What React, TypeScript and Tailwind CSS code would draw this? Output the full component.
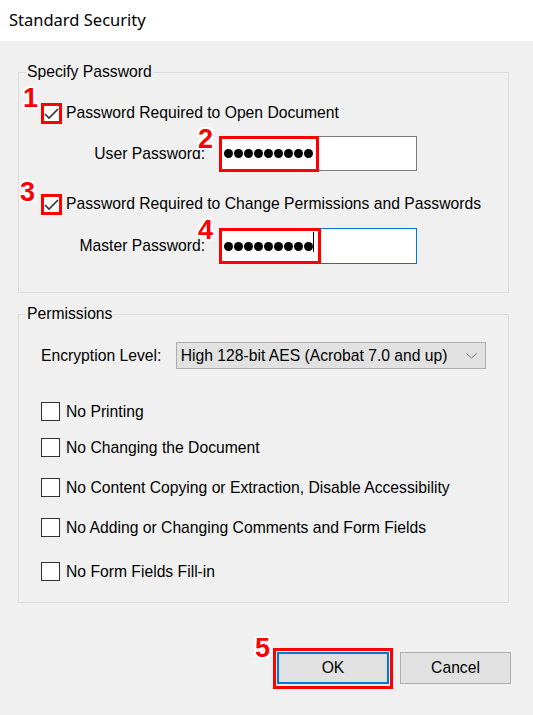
import React from "react";

const outline =
  "[text-shadow:-2px_-2px_0_#fff,2px_-2px_0_#fff,-2px_2px_0_#fff,2px_2px_0_#fff,0_2px_0_#fff,0_-2px_0_#fff,2px_0_0_#fff,-2px_0_0_#fff]";

function Num({ n, cls }: { n: string; cls: string }) {
  return (
    <div
      className={`absolute ${cls} font-['Liberation_Sans',Arial,sans-serif] font-bold text-[27px] leading-none text-[#ff0000] ${outline}`}
    >
      {n}
    </div>
  );
}

function Check({ checked, red }: { checked?: boolean; red?: boolean }) {
  return (
    <div className="relative w-[19px] h-[19px] shrink-0 border border-[#333333] bg-white">
      {checked && (
        <svg className="absolute left-0 top-0" width="19" height="19" viewBox="0 0 19 19">
          <polyline points="3,10 7,14 16,5" fill="none" stroke="#333333" strokeWidth="1.6" />
        </svg>
      )}
      {red && <div className="absolute -left-[1px] -top-[1px] w-[21px] h-[21px] border-[3px] border-[#ff0000]" />}
    </div>
  );
}

function Dots() {
  return (
    <div className="flex items-center gap-[1px]">
      {Array.from({ length: 9 }).map((_, i) => (
        <div key={i} className="w-[9px] h-[9px] rounded-full bg-black" />
      ))}
    </div>
  );
}

function CheckRow({ label, checked, red, cls }: { label: string; checked?: boolean; red?: boolean; cls?: string }) {
  return (
    <div className={`flex items-center gap-[6px] h-[19px] ${cls ?? ""}`}>
      <Check checked={checked} red={red} />
      <span className="whitespace-nowrap pt-[1px]">{label}</span>
    </div>
  );
}

export default function App() {
  return (
    <div className="relative w-[533px] h-[715px] overflow-hidden bg-[#f0f0f0] text-black text-[15.7px] font-['Liberation_Sans',Arial,sans-serif]">
      <div className="h-[41px] bg-white flex items-center pl-[9px] text-[16.5px] font-['Noto_Sans',sans-serif]">
        Standard Security
      </div>

      <div className="pl-[18px] pr-[24px] pt-[31px]">
        {/* Specify Password */}
        <div className="relative h-[221px] border border-[#dcdcdc] px-[22px] pt-[29px]">
          <div className="absolute left-[7px] -top-[10px] px-[1px] bg-[#f0f0f0] leading-[18px]">Specify Password</div>
          <div className="flex flex-col">
            <CheckRow label="Password Required to Open Document" checked red cls="h-[20px]" />
            <div className="flex items-center mt-[14px] h-[35px]">
              <div className="w-[164px] text-right">User Password:</div>
              <div className="relative ml-[14px] w-[198px] h-[35px] border border-[#7a7a7a] bg-white flex items-center pl-[4px]">
                <Dots />
                <div className="absolute -left-[1px] -top-[1px] w-[100px] h-[36px] border-[3px] border-[#ff0000]" />
              </div>
            </div>
            <CheckRow label="Password Required to Change Permissions and Passwords" checked red cls="mt-[22px] h-[20px]" />
            <div className="flex items-center mt-[15px] h-[36px]">
              <div className="w-[164px] text-right">Master Password:</div>
              <div className="relative ml-[14px] w-[198px] h-[36px] border border-[#0078d7] bg-white flex items-center pl-[4px]">
                <Dots />
                <div className="absolute left-[93px] top-[3px] w-[1px] h-[20px] bg-black" />
                <div className="absolute -left-[1px] -top-[1px] w-[102px] h-[36px] border-[3px] border-[#ff0000]" />
              </div>
            </div>
          </div>
        </div>

        {/* Permissions */}
        <div className="relative mt-[21px] h-[289px] border border-[#dcdcdc] px-[22px] pt-[27px]">
          <div className="absolute left-[7px] -top-[10px] px-[1px] bg-[#f0f0f0] leading-[18px]">Permissions</div>
          <div className="flex flex-col">
            <div className="flex items-center h-[27px]">
              <div className="w-[135px]">Encryption Level:</div>
              <div className="w-[311px] h-[27px] border border-[#adadad] bg-[#e1e1e1] flex items-center justify-between pl-[4px] pr-[8px]">
                <span className="whitespace-nowrap">High 128-bit AES (Acrobat 7.0 and up)</span>
                <svg width="11" height="6" viewBox="0 0 11 6">
                  <polyline points="0.5,0.5 5.5,5 10.5,0.5" fill="none" stroke="#777777" strokeWidth="1" />
                </svg>
              </div>
            </div>
            <CheckRow label="No Printing" cls="mt-[33px]" />
            <CheckRow label="No Changing the Document" cls="mt-[17px]" />
            <CheckRow label="No Content Copying or Extraction, Disable Accessibility" cls="mt-[21px]" />
            <CheckRow label="No Adding or Changing Comments and Form Fields" cls="mt-[21px]" />
            <CheckRow label="No Form Fields Fill-in" cls="mt-[25px]" />
          </div>
        </div>
      </div>

      <div className="flex justify-end gap-[11px] pr-[22px] mt-[49px]">
        <div className="relative w-[112px] h-[32px] border-2 border-[#0078d7] bg-[#e1e1e1] flex items-center justify-center">
          OK
          <div className="absolute -left-[6px] -top-[6px] w-[120px] h-[41px] border-[3px] border-[#ff0000]" />
        </div>
        <div className="w-[111px] h-[32px] border border-[#adadad] bg-[#e1e1e1] flex items-center justify-center">
          Cancel
        </div>
      </div>

      <Num n="1" cls="left-[23px] top-[85px]" />
      <Num n="2" cls="left-[198px] top-[126px]" />
      <Num n="3" cls="left-[20px] top-[179px]" />
      <Num n="4" cls="left-[198px] top-[217px]" />
      <Num n="5" cls="left-[255px] top-[635px]" />
    </div>
  );
}
